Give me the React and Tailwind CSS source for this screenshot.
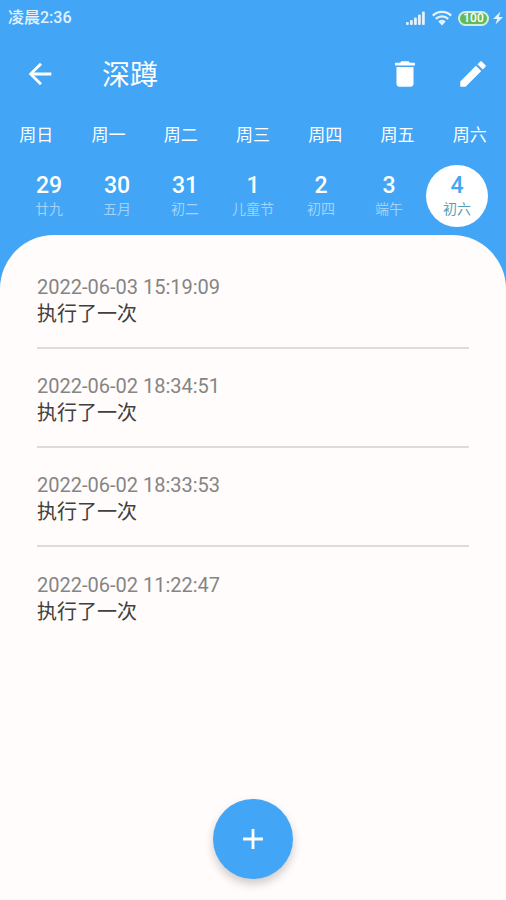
import React, { useState } from "react";

const weekdays = ["周日", "周一", "周二", "周三", "周四", "周五", "周六"];

const days = [
    { day: 29, lunar: "廿九" },
    { day: 30, lunar: "五月" },
    { day: 31, lunar: "初二" },
    { day: 1, lunar: "儿童节" },
    { day: 2, lunar: "初四" },
    { day: 3, lunar: "端午" },
    { day: 4, lunar: "初六" },
];

const records = [
    { time: "2022-06-03 15:19:09", text: "执行了一次" },
    { time: "2022-06-02 18:34:51", text: "执行了一次" },
    { time: "2022-06-02 18:33:53", text: "执行了一次" },
    { time: "2022-06-02 11:22:47", text: "执行了一次" },
];

function Icon({ path }) {
    return (
        <svg viewBox="0 0 24 24" className="size-[34px]" fill="currentColor" aria-hidden="true">
            <path d={path} />
        </svg>
    );
}

function StatusBar() {
    return (
        <div className="flex h-9 items-center justify-between pl-2 pr-[3px]">
            <span className="text-base font-medium text-white/85">凌晨2:36</span>
            <div className="flex items-center gap-1.5 text-white/85">
                {/* Signal */}
                <svg viewBox="0 0 20 14" className="h-[14px] w-5" fill="currentColor" aria-hidden="true">
                    <rect x="0" y="11" width="2.8" height="3" rx="1" />
                    <rect x="4" y="9" width="2.8" height="5" rx="1" />
                    <rect x="8" y="6.5" width="2.8" height="7.5" rx="1" />
                    <rect x="12" y="3.5" width="2.8" height="10.5" rx="1" />
                    <rect x="16" y="0.5" width="2.8" height="13.5" rx="1" />
                </svg>
                {/* Wifi */}
                <svg viewBox="0 0 20 16" className="h-4 w-5" fill="none" stroke="currentColor" strokeWidth="2.2" aria-hidden="true">
                    <path d="M0.8 5.6a13 13 0 0 1 18.4 0" />
                    <path d="M3.8 8.9a8.8 8.8 0 0 1 12.4 0" />
                    <path d="M10 15.4l-3.8-4a5.3 5.3 0 0 1 7.6 0z" fill="currentColor" stroke="none" />
                </svg>
                {/* Battery */}
                <div className="flex items-center gap-1">
                    <span className="flex h-[15px] w-[31px] items-center justify-center rounded-full border-2 border-white/75 bg-[#62bb5b] text-xs leading-none font-medium text-white">
                        100
                    </span>
                    <svg viewBox="0 0 10 14" className="h-[14px] w-[10px]" fill="currentColor" aria-hidden="true">
                        <path d="M7.5 0.5L0 8H4.2L2.5 13.5L10 6H5.8z" />
                    </svg>
                </div>
            </div>
        </div>
    );
}

function App() {
    const [selected, setSelected] = useState(4);

    return (
        <div className="flex min-h-screen flex-col bg-[#42a5f5] font-['Roboto','Noto_Sans_CJK_SC',sans-serif]">
            <header className="text-white">
                <StatusBar />

                {/* Toolbar */}
                <div className="flex h-[76px] items-center pl-[23px] pr-4">
                    <button type="button" aria-label="返回">
                        <Icon path="M20 11H7.83l5.59-5.59L12 4l-8 8 8 8 1.41-1.41L7.83 13H20v-2z" />
                    </button>
                    <h1 className="ml-[45px] flex-1 pt-1 text-[28px] leading-9">深蹲</h1>
                    <div className="flex gap-[34px]">
                        <button type="button" aria-label="删除">
                            <Icon path="M6 19c0 1.1.9 2 2 2h8c1.1 0 2-.9 2-2V7H6v12zM19 4h-3.5l-1-1h-5l-1 1H5v2h14V4z" />
                        </button>
                        <button type="button" aria-label="编辑">
                            <Icon path="M3 17.25V21h3.75L17.81 9.94l-3.75-3.75L3 17.25zM20.71 7.04c.39-.39.39-1.02 0-1.41l-2.34-2.34c-.39-.39-1.02-.39-1.41 0l-1.83 1.83 3.75 3.75 1.83-1.83z" />
                        </button>
                    </div>
                </div>

                {/* Week strip */}
                <div className="grid h-12 grid-cols-7 items-center text-center text-[17px]">
                    {weekdays.map((name) => (
                        <span key={name}>{name}</span>
                    ))}
                </div>
                <div className="mt-[5px] mb-2 grid grid-cols-7 justify-items-center px-[15px]">
                    {days.map((item) => (
                        <button
                            key={item.day}
                            type="button"
                            onClick={() => setSelected(item.day)}
                            className={`flex size-[62px] flex-col items-center justify-center rounded-full pb-[3px] ${
                                item.day === selected ? "bg-white text-[#42a5f5]" : "text-white"
                            }`}
                        >
                            <span className="text-[23px] leading-7 font-medium">{item.day}</span>
                            <span
                                className={`text-sm leading-[18px] whitespace-nowrap ${
                                    item.day === selected ? "text-[#5a9fb8]" : "text-white/50"
                                }`}
                            >
                                {item.lunar}
                            </span>
                        </button>
                    ))}
                </div>
            </header>

            {/* Records */}
            <main className="flex flex-1 flex-col rounded-t-[54px] bg-[#fffcfb] px-[37px] pt-[15px]">
                <ul className="divide-y-2 divide-[#dcdcdc]">
                    {records.map((record) => (
                        <li key={record.time} className="flex h-[99px] flex-col justify-center pt-1 text-xl leading-[27px]">
                            <time className="text-[#858585]">{record.time}</time>
                            <span className="text-[#404040]">{record.text}</span>
                        </li>
                    ))}
                </ul>
                <button
                    type="button"
                    aria-label="添加"
                    className="sticky bottom-[21px] mt-auto mb-[21px] flex size-20 shrink-0 items-center justify-center self-center rounded-full bg-[#42a5f5] text-white shadow-[0_5px_10px_rgba(0,0,0,0.2)]"
                >
                    <Icon path="M19 13h-6v6h-2v-6H5v-2h6V5h2v6h6v2z" />
                </button>
            </main>
        </div>
    );
}

export default App;
